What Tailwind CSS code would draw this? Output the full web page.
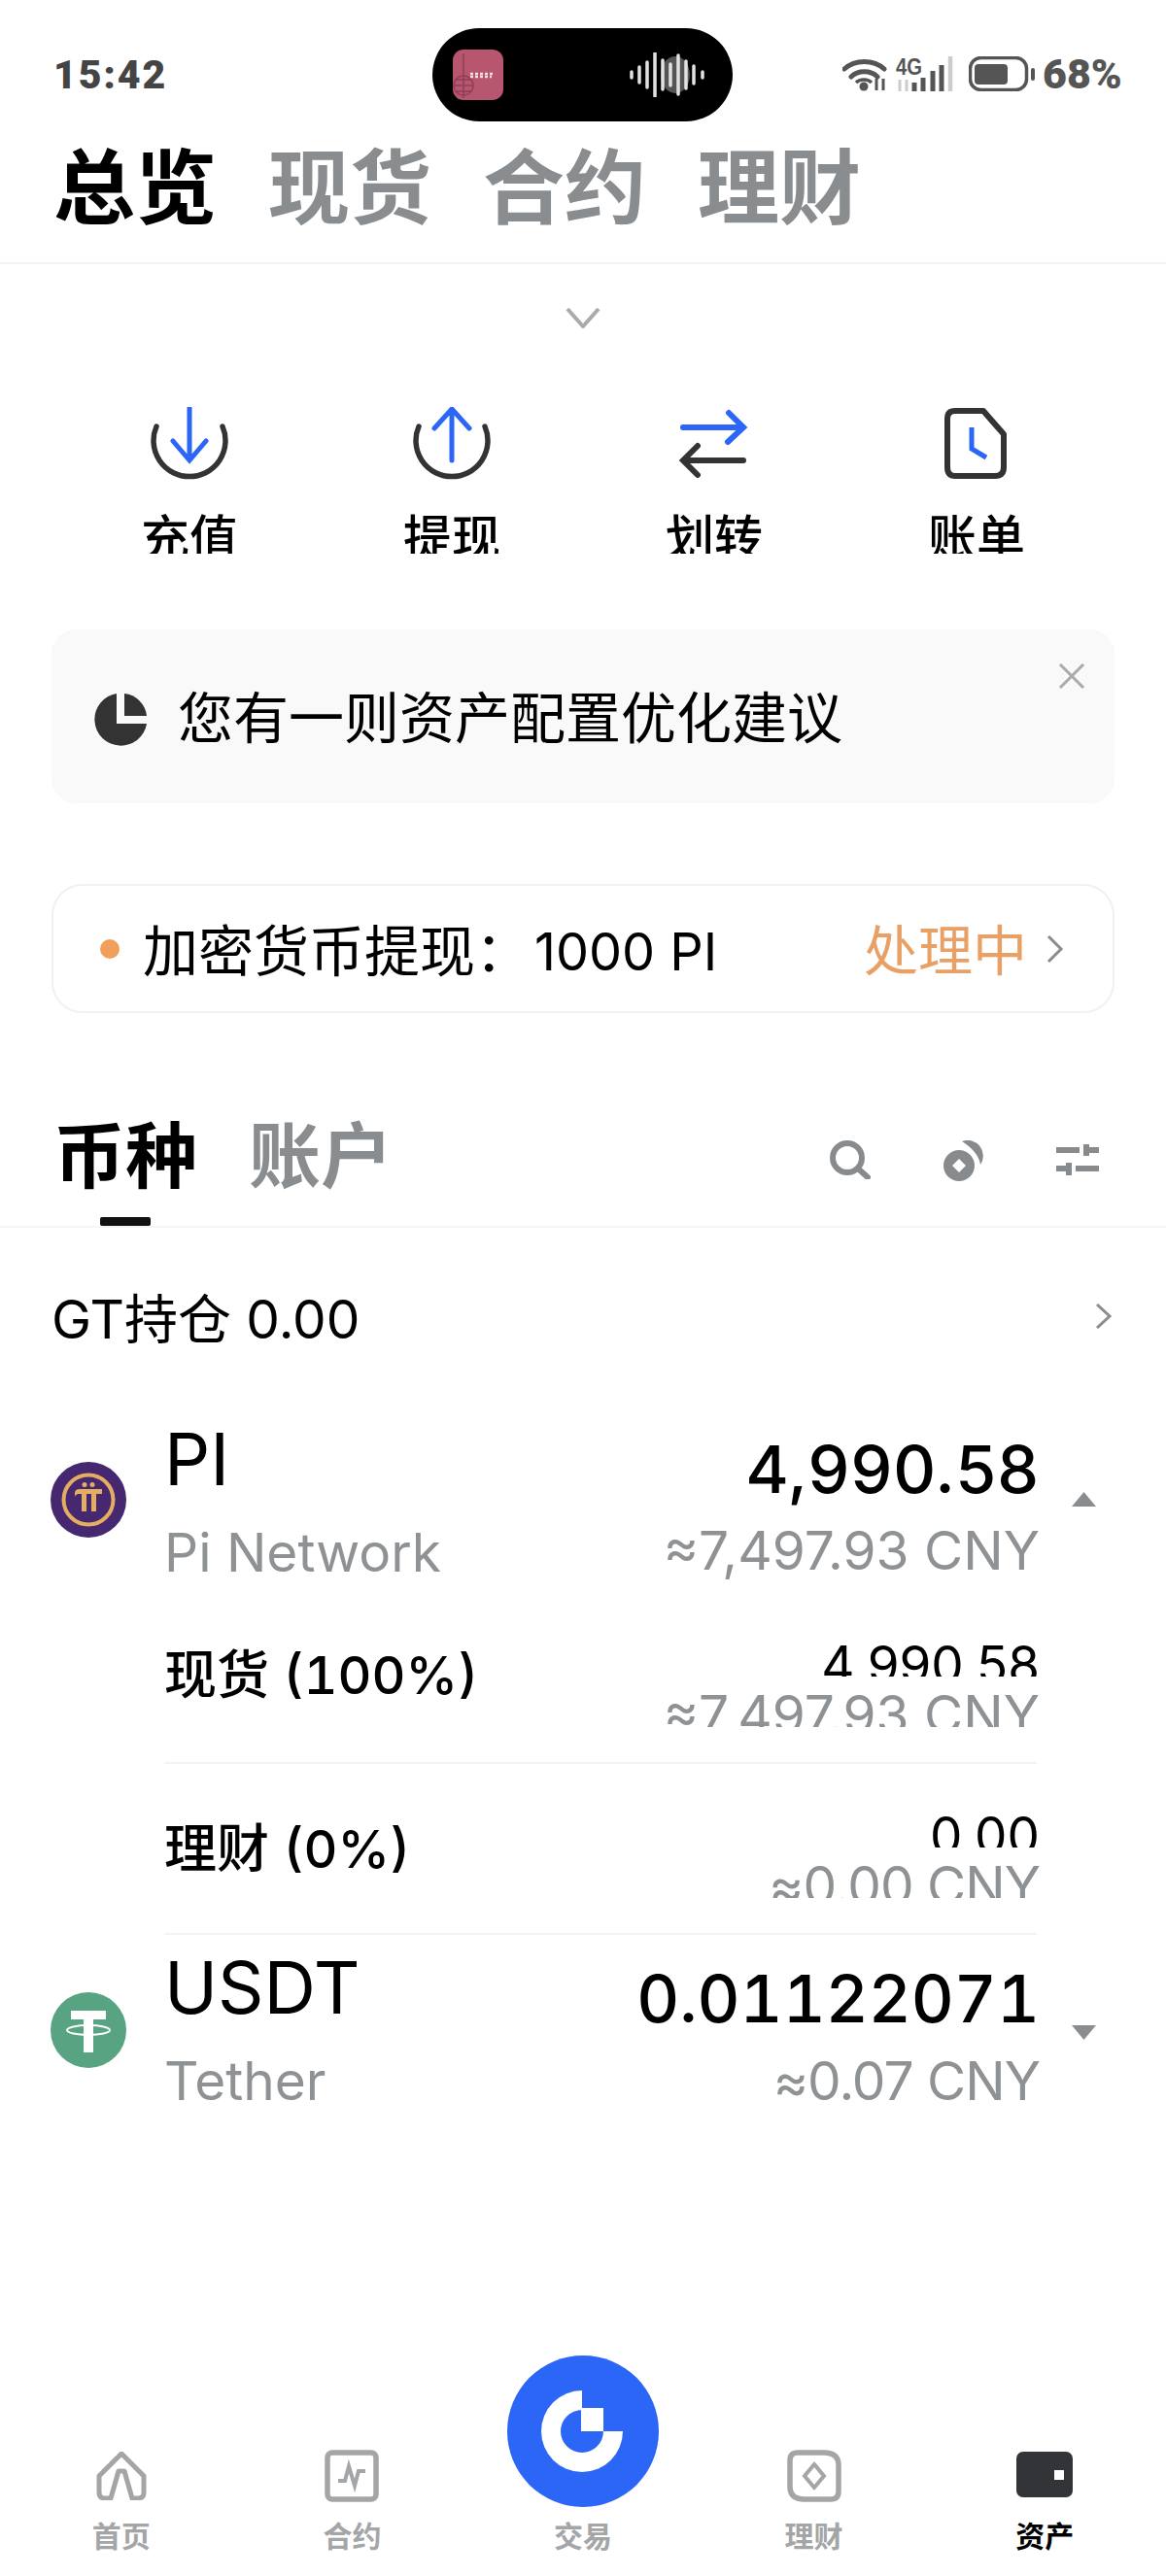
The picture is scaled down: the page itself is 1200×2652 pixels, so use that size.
<!DOCTYPE html>
<html lang="zh-CN">
<head>
  <meta charset="UTF-8" />
  <title>资产总览</title>
  <script src="https://cdn.jsdelivr.net/npm/@tailwindcss/browser@4"></script>
</head>
<body class="bg-white font-['Inter','Noto_Sans_CJK_SC',sans-serif] text-black">
<div class="w-[1200px] h-[2652px] flex flex-col overflow-hidden">

  <!-- status bar -->
  <div class="h-[130px] flex items-start pt-[29px] pl-[55px] shrink-0">
    <div class="w-[390px] h-[96px] flex items-center text-[41px] font-black text-[#444] tracking-[2px] font-['Roboto',sans-serif] leading-none">15:42</div>
    <div class="w-[309px] h-[96px] bg-black rounded-[48px] flex items-center pl-[21px] shrink-0">
      <svg width="52" height="52" viewBox="0 0 52 52">
        <rect width="52" height="52" rx="11" fill="#b8566f"/>
        <circle cx="11" cy="37" r="10" fill="none" stroke="#8f3f56" stroke-width="1.5"/>
        <path d="M11 4V50M1 37H21M2 31H20M2 43H20" stroke="#8f3f56" stroke-width="1.5" fill="none"/>
        <path d="M18 25H42M18 28H40" stroke="#f3dfe4" stroke-width="2.5" stroke-dasharray="3 2" fill="none"/>
      </svg>
      <svg class="ml-[130px]" width="78" height="46" viewBox="0 0 78 46">
        <ellipse cx="47" cy="23" rx="15" ry="19" fill="#555"/>
        <path d="M2 20V26M10 15V31M18 10V36M26 1V45M34 8V38M42 12V34M50 3V43M58 9V37M66 14V32M75 20V26" stroke="#e2e2e2" stroke-width="3.5" stroke-linecap="round" fill="none"/>
      </svg>
    </div>
    <div class="ml-[113px] flex items-start pt-[29px]">
      <svg width="115" height="36" viewBox="0 0 115 36">
        <path d="M2 13C13 3 32 3 43 13M9 21C16 14 29 14 36 21" stroke="#555" stroke-width="5" fill="none" stroke-linecap="round"/>
        <circle cx="22" cy="31" r="4.5" fill="#555"/>
        <path d="M14 27C18 23 26 23 30 27" stroke="#555" stroke-width="3.5" fill="none"/>
        <path d="M35 23V35M42 23V35" stroke="#555" stroke-width="3"/>
        <text x="55" y="19" font-family="Liberation Sans" font-weight="700" font-size="24" fill="#555" textLength="27" lengthAdjust="spacingAndGlyphs">4G</text>
        <path d="M59 24V36M66 24V36" stroke="#ccc" stroke-width="3"/>
        <path d="M74 36V27M83 36V22M93 36V15M102 36V9" stroke="#555" stroke-width="5"/>
        <path d="M111 36V0" stroke="#ccc" stroke-width="4.5"/>
      </svg>
      <svg class="ml-[15px]" width="69" height="36" viewBox="0 0 69 36">
        <rect x="1.5" y="1.5" width="58" height="33" rx="11" fill="none" stroke="#555" stroke-width="3.5"/>
        <rect x="6" y="8" width="34" height="21" rx="4" fill="#555"/>
        <rect x="64" y="12" width="4" height="13" rx="2" fill="#555"/>
      </svg>
      <span class="ml-[7px] -mt-[3px] text-[43px] font-black text-[#555] leading-[42px] font-['Roboto',sans-serif]">68%</span>
    </div>
  </div>

  <!-- top tabs -->
  <div class="h-[142px] shrink-0 pl-[55px] flex items-start gap-[53px] border-b-2 border-[#f3f3f3] text-[84px] leading-[128px] font-bold text-[#8a8d8f]">
    <span class="text-black">总览</span><span>现货</span><span>合约</span><span>理财</span>
  </div>

  <div class="flex justify-center mt-[44px] shrink-0">
    <svg width="36" height="22" viewBox="0 0 36 22"><path d="M2 2L18 20L34 2" stroke="#a8aaac" stroke-width="4" fill="none"/></svg>
  </div>

  <!-- quick actions -->
  <div class="grid grid-cols-4 px-[60px] mt-[81px] shrink-0">
    <div class="flex flex-col items-center">
      <svg width="80" height="76" viewBox="0 0 80 76">
        <path d="M6 20A37 37 0 1 0 74 20" stroke="#333" stroke-width="5.5" fill="none" stroke-linecap="round"/>
        <path d="M40 1V54M23 35L40 55L57 35" stroke="#2b66f6" stroke-width="5" fill="none" stroke-linecap="round"/>
      </svg>
      <div class="h-[41px] mt-[34px] overflow-hidden text-[50px] leading-[50px] font-medium">充值</div>
    </div>
    <div class="flex flex-col items-center">
      <svg width="80" height="76" viewBox="0 0 80 76">
        <path d="M6 20A37 37 0 1 0 74 20" stroke="#333" stroke-width="5.5" fill="none" stroke-linecap="round"/>
        <path d="M40 4V55M22 22L40 2L58 22" stroke="#2b66f6" stroke-width="5" fill="none" stroke-linecap="round"/>
      </svg>
      <div class="h-[41px] mt-[34px] overflow-hidden text-[50px] leading-[50px] font-medium">提现</div>
    </div>
    <div class="flex flex-col items-center">
      <svg width="80" height="76" viewBox="0 0 80 76">
        <path d="M8 21H70M55 6L70 21L54 36" stroke="#2b66f6" stroke-width="6" fill="none" stroke-linecap="round"/>
        <path d="M70 55H8M23 40L8 55L23 70" stroke="#333" stroke-width="6" fill="none" stroke-linecap="round"/>
      </svg>
      <div class="h-[41px] mt-[34px] overflow-hidden text-[50px] leading-[50px] font-medium">划转</div>
    </div>
    <div class="flex flex-col items-center">
      <svg width="80" height="76" viewBox="0 0 80 76">
        <path d="M18 4H47L68 28V62Q68 71 59 71H18Q10 71 10 62V12Q10 4 18 4Z" stroke="#333" stroke-width="6" fill="none" stroke-linejoin="round"/>
        <path d="M35 21V43L50 52" stroke="#2b66f6" stroke-width="5" fill="none"/>
      </svg>
      <div class="h-[41px] mt-[34px] overflow-hidden text-[50px] leading-[50px] font-medium">账单</div>
    </div>
  </div>

  <!-- suggestion card -->
  <div class="mx-[53px] mt-[78px] h-[179px] bg-[#f9f9f9] rounded-[26px] flex items-start pl-[43px] pr-[30px] shrink-0">
    <svg class="mt-[65px]" width="56" height="56" viewBox="0 0 56 56">
      <path d="M24 1A27 27 0 1 0 55 32H24Z" fill="#333"/>
      <path d="M32 1A26 26 0 0 1 55 24H32Z" fill="#333"/>
    </svg>
    <span class="ml-[31px] mt-[54px] text-[57px] leading-[76px] text-black">您有一则资产配置优化建议</span>
    <svg class="ml-auto mt-[35px]" width="28" height="26" viewBox="0 0 28 26"><path d="M2 1L26 25M26 1L2 25" stroke="#a8aaac" stroke-width="3" fill="none"/></svg>
  </div>

  <!-- withdraw status -->
  <div class="mx-[53px] mt-[83px] h-[133px] border-2 border-[#f1f1f1] rounded-[32px] flex items-center pl-[48px] pr-[50px] shrink-0">
    <span class="w-[20px] h-[20px] rounded-full bg-[#f0a05a] shrink-0"></span>
    <span class="ml-[24px] mt-[6px] text-[57px] leading-none text-black">加密货币提现：</span>
    <span class="ml-[4px] mt-[6px] text-[54px] leading-none text-black">1000 PI</span>
    <span class="ml-auto mt-[4px] text-[56px] leading-none text-[#e8a065]">处理中</span>
    <svg class="ml-[20px]" width="18" height="28" viewBox="0 0 18 28"><path d="M2 1L15 14L2 27" stroke="#8a8d8f" stroke-width="3" fill="none"/></svg>
  </div>

  <!-- asset tabs -->
  <div class="mt-[87px] h-[134px] border-b-2 border-[#f5f5f5] pl-[55px] flex items-start shrink-0">
    <div class="flex flex-col items-center">
      <span class="mt-[20px] text-[74px] leading-[80px] font-bold">币种</span>
      <span class="w-[52px] h-[9px] bg-[#111] rounded-[2px] mt-[23px]"></span>
    </div>
    <span class="ml-[53px] mt-[20px] text-[74px] leading-[80px] font-bold text-[#8a8d8f]">账户</span>
    <div class="ml-auto mr-[69px] mt-[44px] flex items-start">
      <svg width="42" height="40" viewBox="0 0 42 40">
        <circle cx="18" cy="18" r="15" stroke="#888b8d" stroke-width="6" fill="none"/>
        <path d="M29 29L39 38" stroke="#888b8d" stroke-width="6" stroke-linecap="round"/>
      </svg>
      <svg class="ml-[75px]" width="42" height="42" viewBox="0 0 42 42">
        <path d="M19 1A16 16 0 0 1 38 25Q36 12 19 1Z" fill="#888b8d"/>
        <circle cx="16" cy="26" r="16" fill="#888b8d"/>
        <path d="M16 19L23 26L16 33L9 26Z" fill="#fff"/>
      </svg>
      <svg class="ml-[74px] mt-[4px]" width="44" height="32" viewBox="0 0 44 32">
        <path d="M0 6H24M29 6H44M0 25H15M20 25H44" stroke="#888b8d" stroke-width="6"/>
        <path d="M31 0V12M13 19V32" stroke="#888b8d" stroke-width="6"/>
      </svg>
    </div>
  </div>

  <!-- GT row -->
  <div class="mt-[59px] h-[70px] pl-[53px] pr-[55px] flex items-center shrink-0">
    <span class="text-[55px] leading-none text-black">GT持仓 0.00</span>
    <svg class="ml-auto -mt-[6px]" width="18" height="26" viewBox="0 0 18 26"><path d="M2 1L15 13L2 25" stroke="#8a8d8f" stroke-width="3" fill="none"/></svg>
  </div>

  <!-- PI -->
  <div class="mt-[61px] h-[188px] pl-[52px] pr-[72px] flex items-start shrink-0">
    <svg class="mt-[51px] shrink-0" width="78" height="78" viewBox="0 0 78 78">
      <circle cx="39" cy="39" r="39" fill="#45286f"/>
      <circle cx="39" cy="39" r="25.5" fill="none" stroke="#e5ad61" stroke-width="4"/>
      <path d="M25 32Q25 28 30 28H53V33H47V51H42V33H37V51H32V33H29Q26 33 25 36Z" fill="#e5ad61"/>
      <circle cx="35" cy="23.5" r="2.5" fill="#e5ad61"/><circle cx="43" cy="23.5" r="2.5" fill="#e5ad61"/>
    </svg>
    <div class="ml-[39px] w-[898px] flex justify-between">
      <div>
        <div class="text-[74px] leading-[96px] text-black">PI</div>
        <div class="text-[55px] leading-[96px] text-[#8f9294]">Pi Network</div>
      </div>
      <div class="text-right -mr-[3px]">
        <div class="mt-[21px] text-[68px] leading-[74px] font-medium tracking-[1px] text-black">4,990.58</div>
        <div class="-mt-[1px] text-[55px] leading-[96px] text-[#8f9294]">≈7,497.93 CNY</div>
      </div>
    </div>
    <svg class="ml-[36px] mt-[82px] shrink-0" width="25" height="15" viewBox="0 0 25 15"><path d="M12.5 0L25 15H0Z" fill="#8a8d8f"/></svg>
  </div>

  <!-- PI breakdown -->
  <div class="ml-[169px] w-[898px] shrink-0">
    <div class="h-[174px] border-b-2 border-[#f3f3f3] flex justify-between items-start">
      <span class="mt-[53px] text-[54px] leading-[60px] font-medium tabular-nums text-black">现货 (100%)</span>
      <div class="mt-[46px] text-right -mr-[3px]">
        <div class="h-[38px] overflow-hidden text-[53px] leading-[53px] text-black">4,990.58</div>
        <div class="mt-[12px] h-[40px] overflow-hidden text-[55px] leading-[55px] text-[#8f9294]">≈7,497.93 CNY</div>
      </div>
    </div>
    <div class="h-[176px] border-b-2 border-[#f3f3f3] flex justify-between items-start">
      <span class="mt-[58px] text-[54px] leading-[60px] font-medium tabular-nums text-black">理财 (0%)</span>
      <div class="mt-[48px] text-right -mr-[3px]">
        <div class="h-[38px] overflow-hidden text-[53px] leading-[53px] text-black">0.00</div>
        <div class="mt-[12px] h-[40px] overflow-hidden text-[55px] leading-[55px] tracking-[-1px] text-[#8f9294]">≈0.00 CNY</div>
      </div>
    </div>
  </div>

  <!-- USDT -->
  <div class="mt-[6px] pl-[52px] pr-[72px] flex items-start shrink-0">
    <svg class="mt-[53px] shrink-0" width="78" height="78" viewBox="0 0 78 78">
      <circle cx="39" cy="39" r="39" fill="#58a382"/>
      <path d="M21 19H57V28H44V62H34V28H21Z" fill="#fff"/>
      <ellipse cx="39" cy="39" rx="22" ry="5" fill="none" stroke="#fff" stroke-width="2"/>
    </svg>
    <div class="ml-[39px] w-[898px] flex justify-between">
      <div>
        <div class="text-[74px] leading-[96px] text-black">USDT</div>
        <div class="text-[55px] leading-[96px] text-[#8f9294]">Tether</div>
      </div>
      <div class="text-right -mr-[3px]">
        <div class="mt-[22px] text-[68px] leading-[74px] font-medium tabular-nums text-black">0.01122071</div>
        <div class="text-[55px] leading-[96px] tracking-[-1px] text-[#8f9294]">≈0.07 CNY</div>
      </div>
    </div>
    <svg class="ml-[36px] mt-[87px] shrink-0" width="25" height="15" viewBox="0 0 25 15"><path d="M12.5 15L25 0H0Z" fill="#8a8d8f"/></svg>
  </div>

  <!-- bottom nav -->
  <nav class="mt-auto mb-[24px] px-[6px] grid grid-cols-5 items-end text-[30px] leading-[34px] font-bold text-[#a3a5a7] shrink-0">
    <div class="flex flex-col items-center">
      <svg width="54" height="50" viewBox="0 0 54 50">
        <path d="M27 2L50 25V42Q50 48 44 48H38L30 20H24L16 48H10Q4 48 4 42V25Z" stroke="#a3a5a7" stroke-width="5" fill="none" stroke-linejoin="round"/>
      </svg>
      <span class="mt-[20px]">首页</span>
    </div>
    <div class="flex flex-col items-center">
      <svg width="56" height="54" viewBox="0 0 56 54">
        <rect x="3" y="3" width="50" height="48" rx="5" stroke="#a3a5a7" stroke-width="5.5" fill="none"/>
        <path d="M14 32L21 32L25 17L31 37L35 22H42" stroke="#a3a5a7" stroke-width="4" fill="none"/>
      </svg>
      <span class="mt-[18px]">合约</span>
    </div>
    <div class="flex flex-col items-center">
      <svg width="156" height="156" viewBox="0 0 156 156">
        <circle cx="78" cy="78" r="78" fill="#2b66f6"/>
        <path fill-rule="evenodd" d="M77 36A42 42 0 1 0 119 78H99A22 22 0 1 1 77 56Z" fill="#fff"/>
        <rect x="76" y="54" width="23" height="24" fill="#fff"/>
      </svg>
      <span class="mt-[13px]">交易</span>
    </div>
    <div class="flex flex-col items-center">
      <svg width="56" height="54" viewBox="0 0 56 54">
        <path d="M11 3H38Q53 3 53 16V43Q53 51 45 51H18Q3 51 3 38V11Q3 3 11 3Z" stroke="#a3a5a7" stroke-width="5.5" fill="none"/>
        <path d="M28 15L38 27L28 39L18 27Z" stroke="#a3a5a7" stroke-width="4" fill="none"/>
      </svg>
      <span class="mt-[18px]">理财</span>
    </div>
    <div class="flex flex-col items-center text-black">
      <svg width="58" height="48" viewBox="0 0 58 48">
        <rect width="58" height="47" rx="7" fill="#333438"/>
        <rect x="39" y="19" width="10" height="10" fill="#fff"/>
      </svg>
      <span class="mt-[22px]">资产</span>
    </div>
  </nav>
</div>
</body>
</html>
